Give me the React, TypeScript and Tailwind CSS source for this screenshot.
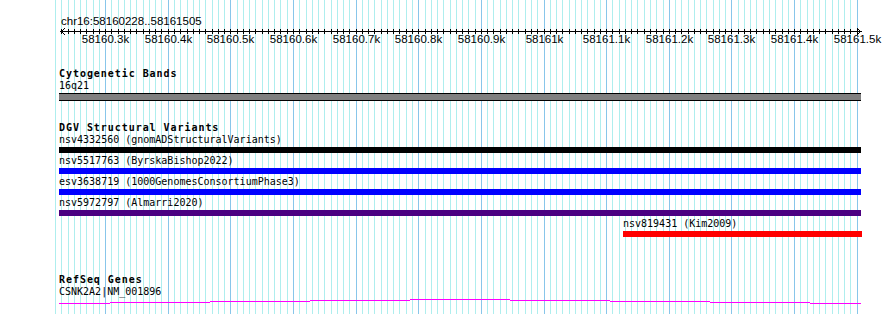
const MONO = "font-['DejaVu_Sans_Mono',monospace]";

// genome coordinate (offset from 58160000) -> page x
const px = (v: number) => Math.round(105.1 + (v - 300) * 0.6263);

const gridTicks = Array.from({ length: 129 }, (_, i) => 220 + i * 10);
const rulerTicks = gridTicks.filter((v) => v >= 230);
const labelTicks = Array.from({ length: 13 }, (_, i) => 300 + i * 100);

const tickLabel = (v: number) => {
  if (v < 1000) return `58160.${v / 100}k`;
  if (v === 1000) return "58161k";
  return `58161.${(v - 1000) / 100}k`;
};

const GridLines = () => (
  <svg className="absolute inset-0" width={890} height={314} shapeRendering="crispEdges">
    {gridTicks.map((v) => (
      <line
        key={v}
        x1={px(v) + 0.5}
        x2={px(v) + 0.5}
        y1={0}
        y2={314}
        stroke={v % 100 === 0 ? "#88c6ea" : "#aeeeee"}
        strokeWidth={1}
      />
    ))}
  </svg>
);

const Ruler = () => (
  <svg className="relative block" width={890} height={50} shapeRendering="crispEdges">
    <text x={61} y={25} fontSize={11.5} fontFamily="Liberation Sans, sans-serif" fill="#000">
      chr16:58160228..58161505
    </text>
    <line x1={60} x2={861} y1={31.5} y2={31.5} stroke="#000" />
    <polyline points="65,28.5 61,31.5 65,34.5" fill="none" stroke="#000" />
    <polyline points="857,28.5 861,31.5 857,34.5" fill="none" stroke="#000" />
    {rulerTicks.map((v) => (
      <line key={v} x1={px(v) + 0.5} x2={px(v) + 0.5} y1={29} y2={34} stroke="#000" />
    ))}
    {labelTicks.map((v) => (
      <text
        key={v}
        x={px(v) + 0.5}
        y={43}
        fontSize={11.5}
        textAnchor="middle"
        fontFamily="Liberation Sans, sans-serif"
        fill="#000"
      >
        {tickLabel(v)}
      </text>
    ))}
  </svg>
);

const TrackTitle = ({ children }: { children: string }) => (
  <div className={`${MONO} font-bold text-[10px] leading-[10px] tracking-[0.95px] text-black`}>{children}</div>
);

const Feature = ({ label, bar, className = "" }: { label: string; bar: string; className?: string }) => (
  <div className={`flex flex-col gap-[2px] ${className}`}>
    <div className={`${MONO} text-[10px] leading-[10px] text-black whitespace-nowrap`}>{label}</div>
    <div className={`h-[6px] ${bar}`} />
  </div>
);

const geneSteps = [
  [59, 110, 4], [110, 210, 3], [210, 310, 2], [310, 410, 1], [410, 510, 0],
  [510, 610, 1], [610, 710, 2], [710, 810, 3], [810, 861, 4],
];

export default function App() {
  return (
    <div className="relative w-[890px] h-[314px] bg-white overflow-hidden">
      <GridLines />
      <Ruler />
      <div className="relative flex flex-col pl-[59px] w-[861px]">
        {/* cytogenetic bands */}
        <div className="mt-[19px] flex flex-col gap-[2px]">
          <TrackTitle>Cytogenetic Bands</TrackTitle>
          <div className={`${MONO} text-[10px] leading-[10px] text-black`}>16q21</div>
          <div className="h-[8px] bg-[#808080] border-y border-black" />
        </div>

        {/* DGV */}
        <div className="mt-[22px] flex flex-col gap-[2px]">
          <TrackTitle>DGV Structural Variants</TrackTitle>
          <div className="flex flex-col gap-[3px]">
            <Feature label="nsv4332560 (gnomADStructuralVariants)" bar="bg-black" />
            <Feature label="nsv5517763 (ByrskaBishop2022)" bar="bg-[#0000ff]" />
            <Feature label="esv3638719 (1000GenomesConsortiumPhase3)" bar="bg-[#0000ff]" />
            <Feature label="nsv5972797 (Almarri2020)" bar="bg-[#4b0082]" />
            <Feature label="nsv819431 (Kim2009)" bar="bg-[#ff0000] w-[239px]" className="ml-[564px]" />
          </div>
        </div>

        {/* RefSeq */}
        <div className="mt-[38px] flex flex-col gap-[2px]">
          <TrackTitle>RefSeq Genes</TrackTitle>
          <div className={`${MONO} text-[10px] leading-[10px] text-black`}>CSNK2A2|NM_001896</div>
          <svg width={802} height={8} shapeRendering="crispEdges" className="block">
            {geneSteps.map(([a, b, y]) => (
              <rect key={a} x={a - 59} y={y} width={b - a} height={1} fill="#ff00ff" />
            ))}
          </svg>
        </div>
      </div>
    </div>
  );
}
